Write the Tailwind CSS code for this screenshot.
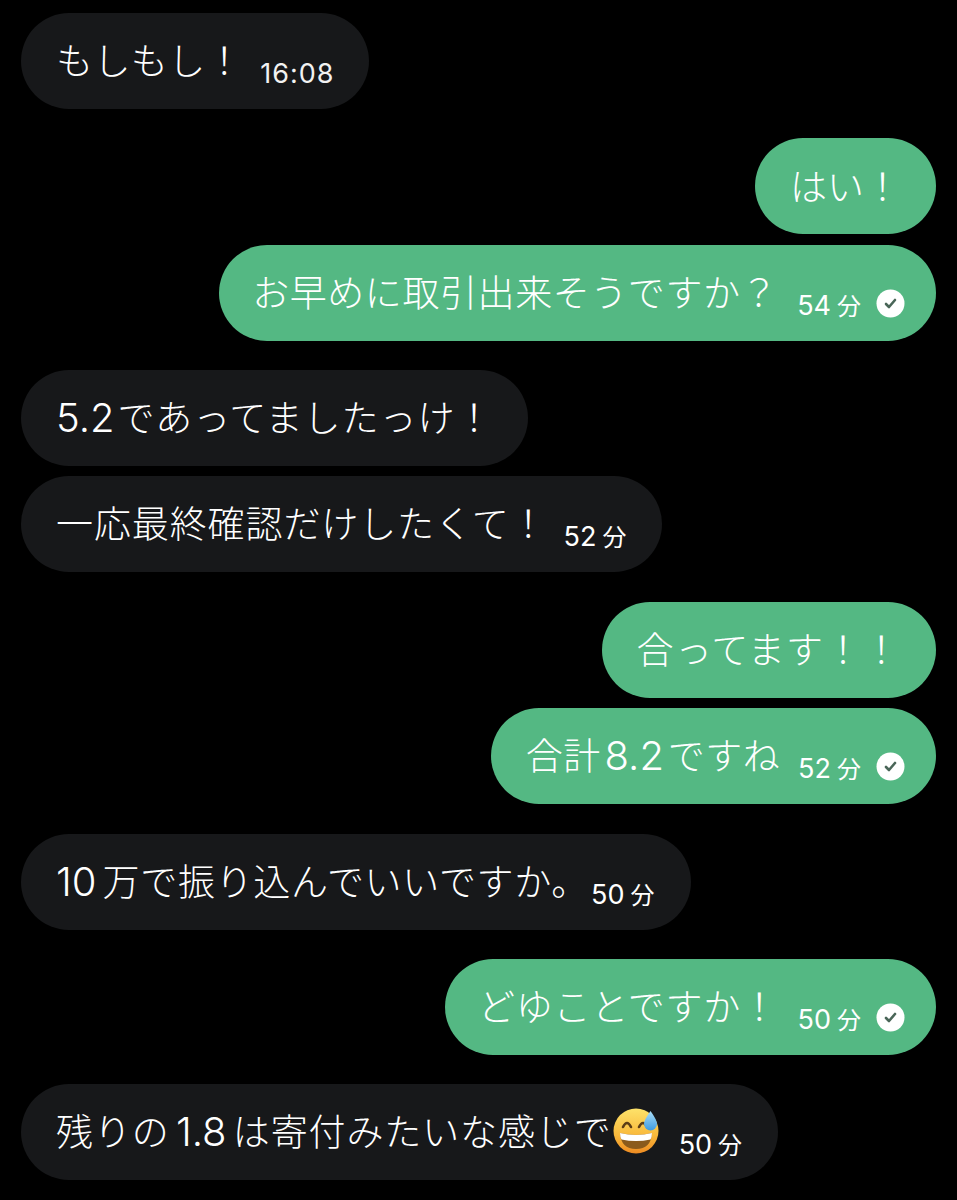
<!DOCTYPE html>
<html lang="ja">
<head>
    <meta charset="UTF-8">
    <meta name="viewport" content="width=device-width, initial-scale=1.0">
    <title>Chat</title>
    <script src="https://cdn.jsdelivr.net/npm/@tailwindcss/browser@4"></script>
</head>
<body class="bg-black">
    <div class="w-[957px] h-[1200px] overflow-hidden bg-black flex flex-col pt-[13px] px-[21px] font-['Inter','Noto_Sans_CJK_JP',sans-serif] font-light text-white">

        <div class="self-start h-[96px] rounded-[48px] bg-[#17181a] flex items-center px-[35px]">
            <span class="text-[37px] leading-none tracking-[0.43px]">もしもし！</span>
            <span class="ml-[17px] mt-[25px] text-[27px] leading-none tracking-[1px] font-normal text-[#f2f2f2]">16:08</span>
        </div>

        <div class="self-end mt-[29px] h-[96px] rounded-[48px] bg-[#54b883] flex items-center px-[35px]">
            <span class="text-[37px] leading-none mt-[2px]">はい！</span>
        </div>
        <div class="self-end mt-[11px] h-[96px] rounded-[48px] bg-[#54b883] flex items-center pl-[33px] pr-[31px]">
            <span class="text-[37px] leading-none tracking-[0.57px]">お早めに取引出来そうですか？</span>
            <span class="ml-[19px] mt-[24px] flex items-baseline leading-none font-normal"><span class="text-[27px]">54</span><span class="ml-[6px] text-[24px]">分</span></span>
            <svg class="ml-[15px] mt-[21px]" width="29" height="29" viewBox="0 0 29 29"><circle cx="14.5" cy="14.5" r="14" fill="#fff"/><path d="M10 15l3 3 6-7" fill="none" stroke="#4a6658" stroke-width="2.600" stroke-linecap="round" stroke-linejoin="round"/></svg>
        </div>

        <div class="self-start mt-[29px] h-[96px] rounded-[48px] bg-[#17181a] flex items-center px-[35px]">
            <span class="text-[37px] leading-none tracking-[1px]"><span class="text-[40px] tracking-normal mr-[3px]">5.2</span>であってましたっけ！</span>
        </div>
        <div class="self-start mt-[10px] h-[96px] rounded-[48px] bg-[#17181a] flex items-center pl-[35px] pr-[36px]">
            <span class="text-[37px] leading-none tracking-[0.9px]">一応最終確認だけしたくて！</span>
            <span class="ml-[16px] mt-[24px] flex items-baseline leading-none font-normal"><span class="text-[27px]">52</span><span class="ml-[6px] text-[24px]">分</span></span>
        </div>

        <div class="self-end mt-[30px] h-[96px] rounded-[48px] bg-[#54b883] flex items-center px-[35px]">
            <span class="text-[37px] leading-none tracking-[1.3px]">合ってます！！</span>
        </div>
        <div class="self-end mt-[10px] h-[96px] rounded-[48px] bg-[#54b883] flex items-center pl-[35px] pr-[31px]">
            <span class="text-[37px] leading-none tracking-[0.43px] [word-spacing:-7px]">合計 <span class="text-[40px] tracking-normal">8.2</span> ですね</span>
            <span class="ml-[18px] mt-[24px] flex items-baseline leading-none font-normal"><span class="text-[27px]">52</span><span class="ml-[6px] text-[24px]">分</span></span>
            <svg class="ml-[15px] mt-[21px]" width="29" height="29" viewBox="0 0 29 29"><circle cx="14.5" cy="14.5" r="14" fill="#fff"/><path d="M10 15l3 3 6-7" fill="none" stroke="#4a6658" stroke-width="2.600" stroke-linecap="round" stroke-linejoin="round"/></svg>
        </div>

        <div class="self-start mt-[30px] h-[96px] rounded-[48px] bg-[#17181a] flex items-center pl-[35px] pr-[37px]">
            <span class="text-[37px] leading-none tracking-[0.7px] [word-spacing:-5px]"><span class="text-[40px] tracking-normal">10</span> 万で振り込んでいいですか。</span>
            <span class="ml-[2px] mt-[24px] flex items-baseline leading-none font-normal"><span class="text-[27px]">50</span><span class="ml-[6px] text-[24px]">分</span></span>
        </div>

        <div class="self-end mt-[29px] h-[96px] rounded-[48px] bg-[#54b883] flex items-center pl-[33px] pr-[31px]">
            <span class="text-[37px] leading-none tracking-[0.7px]">どゆことですか！</span>
            <span class="ml-[19px] mt-[24px] flex items-baseline leading-none font-normal"><span class="text-[27px]">50</span><span class="ml-[6px] text-[24px]">分</span></span>
            <svg class="ml-[15px] mt-[21px]" width="29" height="29" viewBox="0 0 29 29"><circle cx="14.5" cy="14.5" r="14" fill="#fff"/><path d="M10 15l3 3 6-7" fill="none" stroke="#4a6658" stroke-width="2.600" stroke-linecap="round" stroke-linejoin="round"/></svg>
        </div>

        <div class="self-start mt-[29px] h-[96px] rounded-[48px] bg-[#17181a] flex items-center pl-[35px] pr-[36px]">
            <span class="text-[37px] leading-none tracking-[0.88px] [word-spacing:-5px]">残りの <span class="text-[40px] tracking-normal">1.8</span> は寄付みたいな感じで</span>
            <svg class="ml-[1px] mb-[2px]" width="46" height="46" viewBox="0 0 46 46">
                <defs>
                    <linearGradient id="face" x1="0" y1="0" x2="0" y2="1"><stop offset="0" stop-color="#fde26a"/><stop offset="0.6" stop-color="#f9b93b"/><stop offset="1" stop-color="#ee8b22"/></linearGradient>
                    <linearGradient id="drop" x1="0" y1="0" x2="0" y2="1"><stop offset="0" stop-color="#a9dcf7"/><stop offset="1" stop-color="#3d9be0"/></linearGradient>
                </defs>
                <circle cx="23" cy="23" r="22.5" fill="url(#face)"/>
                <path d="M7 25q16 4 32 0q-1 16-16 16T7 25z" fill="#8a5a1c"/>
                <path d="M7 25q16 4 32 0q0 4-1.500 6.500q-14.500 3-29 0Q7 29 7 25z" fill="#fff"/>
                <path d="M10 19q4-8 8 0M26 19q4-8 8 0" fill="none" stroke="#5c3d16" stroke-width="2.600" stroke-linecap="round"/>
                <path d="M37.500 3q6.500 9 6.500 13a6.500 6.500 0 0 1-13 0q0-4 6.500-13z" fill="url(#drop)"/>
            </svg>
            <span class="ml-[20px] mt-[24px] flex items-baseline leading-none font-normal"><span class="text-[27px]">50</span><span class="ml-[6px] text-[24px]">分</span></span>
        </div>
    </div>
</body>
</html>
